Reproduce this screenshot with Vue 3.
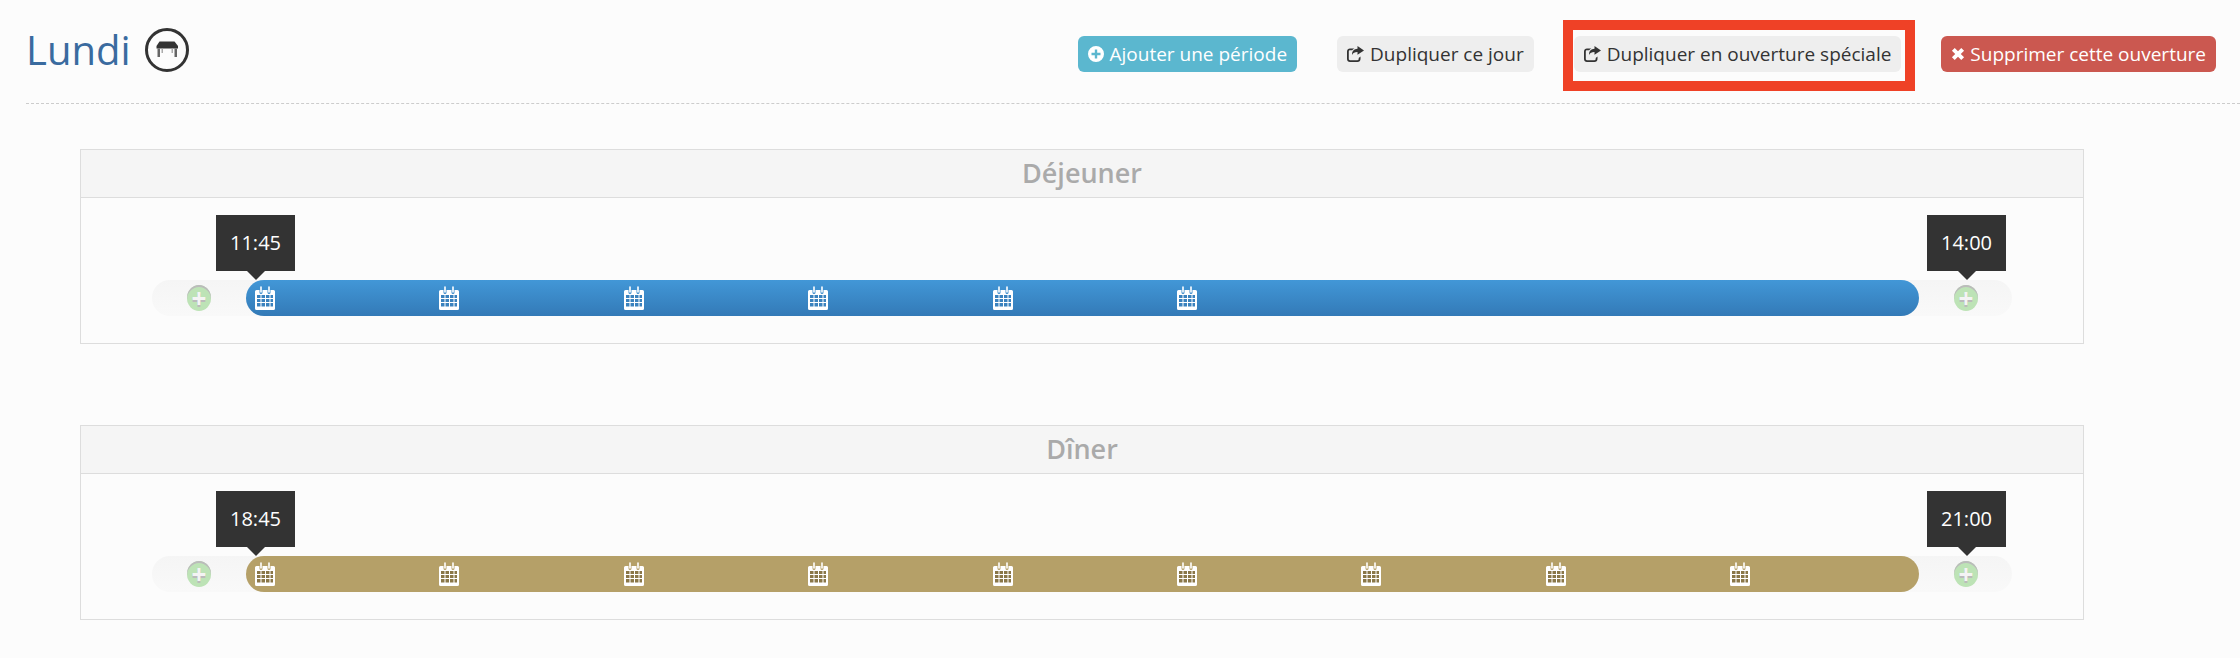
<template>
  <div class="page">
    <header class="day-head">
      <h1 class="day-title">
        Lundi
        <svg class="table-icon" viewBox="0 0 44 44" width="44" height="44">
          <circle cx="22" cy="22" r="20.500" fill="none" stroke="#333" stroke-width="3" />
          <path d="M14.500 13.500h15l3.500 4.500v2.500H11.500V18z" fill="#333" />
          <path d="M12.500 20.500H15V29h-2.500zM29.500 20.500H32V29h-2.500z" fill="#666" />
          <path d="M16.500 20.500H18V25h-1.500zM26.500 20.500H28V25h-1.500z" fill="#aaa" />
        </svg>
      </h1>
      <div class="actions">
        <a class="btn btn-info">
          <svg class="ico" viewBox="0 0 16 16" width="16" height="16">
            <path fill-rule="evenodd" d="M8 0a8 8 0 1 0 0 16A8 8 0 0 0 8 0zM6.800 3.500h2.400v3.300h3.300v2.400H9.200v3.300H6.800V9.200H3.500V6.800h3.300z" fill="#fff" />
          </svg>
          Ajouter une période
        </a>
        <a class="btn btn-default">
          <svg class="ico" viewBox="0 0 17 16" width="17" height="16">
            <path d="M10.500 0v2.800C7 3 5 5 5 9c1.200-2.300 3-3.100 5.500-3v2.800L17 4.400zM3 2.500C1.300 2.500 0 3.800 0 5.500v7.500C0 14.700 1.300 16 3 16h7.500c1.700 0 3-1.300 3-3v-2.400l-1.800 1.300V13c0 .7-.5 1.200-1.200 1.200H3c-.7 0-1.200-.5-1.200-1.200V5.500c0-.7.5-1.200 1.200-1.200h2.200c.6-.7 1.300-1.300 2.200-1.800z" fill="#333" />
          </svg>
          Dupliquer ce jour
        </a>
        <a class="btn btn-default highlighted">
          <svg class="ico" viewBox="0 0 17 16" width="17" height="16">
            <path d="M10.500 0v2.800C7 3 5 5 5 9c1.200-2.300 3-3.100 5.500-3v2.800L17 4.400zM3 2.500C1.300 2.500 0 3.800 0 5.500v7.500C0 14.700 1.300 16 3 16h7.500c1.700 0 3-1.300 3-3v-2.400l-1.800 1.300V13c0 .7-.5 1.200-1.200 1.200H3c-.7 0-1.200-.5-1.200-1.200V5.500c0-.7.5-1.200 1.200-1.200h2.200c.6-.7 1.300-1.300 2.200-1.800z" fill="#333" />
          </svg>
          Dupliquer en ouverture spéciale
        </a>
        <a class="btn btn-danger">
          <svg class="ico" viewBox="0 0 12 12" width="14" height="14">
            <path d="M3.200.8 6 3.600 8.800.8l2.400 2.400L8.400 6l2.800 2.800-2.400 2.400L6 8.400l-2.800 2.800L.8 8.800 3.600 6 .8 3.200z" fill="#fff" />
          </svg>
          Supprimer cette ouverture
        </a>
      </div>
    </header>

    <section v-for="period in periods" :key="period.name" class="period">
      <h2 class="period-title">{{ period.name }}</h2>
      <div class="period-body">
        <div class="track">
          <div class="track-end">
            <span class="plus">+</span>
          </div>
          <div class="bar" :class="period.color">
            <span class="time-tip">{{ period.start }}</span>
            <svg v-for="n in period.days" :key="n" class="cal" viewBox="0 0 20 24" width="20" height="24">
              <path d="M1.500 4H4.500V6.500a1.500 1.500 0 0 0 3 0V4h5V6.500a1.500 1.500 0 0 0 3 0V4h3A1.500 1.500 0 0 1 20 5.500v17a1.500 1.500 0 0 1-1.500 1.500h-17A1.500 1.500 0 0 1 0 22.500v-17A1.500 1.500 0 0 1 1.500 4z" fill="#fff" />
              <path d="M5.200 1a.8.8 0 0 1 1.600 0v5a.8.8 0 0 1-1.600 0zM13.200 1a.8.8 0 0 1 1.600 0v5a.8.8 0 0 1-1.600 0z" fill="#fff" />
              <path class="cells" d="M2 9h3.500v3H2zM6.500 9H10v3H6.500zM11 9h3.500v3H11zM15.500 9H18v3h-2.500zM2 13h3.500v3H2zM6.500 13H10v3H6.500zM11 13h3.500v3H11zM15.500 13H18v3h-2.500zM2 17h3.500v3.500H2zM6.500 17H10v3.500H6.500zM11 17h3.500v3.500H11zM15.500 17H18v3.500h-2.500z" />
            </svg>
          </div>
          <div class="track-end right">
            <span class="time-tip">{{ period.end }}</span>
            <span class="plus">+</span>
          </div>
        </div>
      </div>
    </section>
  </div>
</template>

<script setup>
const periods = [
  { name: 'Déjeuner', start: '11:45', end: '14:00', color: 'blue', days: 6 },
  { name: 'Dîner', start: '18:45', end: '21:00', color: 'gold', days: 9 }
];
</script>

<style>
body {
  background: #fcfcfc;
}
</style>

<style scoped>
.page {
  height: 658px;
  overflow: hidden;
  font-family: "Open Sans", sans-serif;
  color: #333;
}

.day-head {
  display: flex;
  align-items: flex-start;
  justify-content: space-between;
  height: 103px;
  margin-left: 26px;
  padding-right: 24px;
  border-bottom: 1px dashed #ccc;
}

.day-title {
  display: flex;
  align-items: center;
  gap: 14px;
  margin: 24px 0 0;
  font-size: 40px;
  line-height: 52px;
  font-weight: 400;
  color: #3a6b9f;
}

.actions {
  display: flex;
  gap: 40px;
  margin-top: 36px;
}

.btn {
  display: flex;
  align-items: center;
  gap: 6px;
  height: 36px;
  padding: 0 10px;
  border-radius: 6px;
  font-size: 19px;
  white-space: nowrap;
}

.btn-info {
  background: #5bb7cf;
  color: #fff;
}

.btn-default {
  background: #eee;
  color: #333;
}

.btn-danger {
  gap: 5px;
  background: #cb5850;
  color: #fff;
}

.highlighted {
  position: relative;
}

.highlighted::after {
  content: "";
  position: absolute;
  inset: -16px -14px -19px -11px;
  border: 10px solid #ef4126;
  pointer-events: none;
}

.period {
  width: 2004px;
  margin: 45px 0 0 80px;
  box-sizing: border-box;
  border: 1px solid #ddd;
}

.period + .period {
  margin-top: 81px;
}

.period-title {
  box-sizing: border-box;
  height: 48px;
  margin: 0;
  background: #f5f5f5;
  border-bottom: 1px solid #ddd;
  text-align: center;
  font-size: 27px;
  line-height: 46px;
  font-weight: 600;
  color: #aaa;
}

.period-body {
  padding: 82px 71px 27px 71px;
}

.track {
  display: flex;
  height: 36px;
  border-radius: 18px;
  background: linear-gradient(to bottom, #f5f5f5, #f9f9f9);
}

.track-end {
  position: relative;
  display: flex;
  align-items: center;
  justify-content: center;
  flex: 0 0 94px;
}

.track-end.right {
  flex-basis: 92px;
  margin-left: 1px;
}

.plus {
  width: 24px;
  height: 26px;
  border-radius: 50%;
  background: #bde3b6;
  box-shadow: inset 0 2px 0 #bbb;
  text-align: center;
  font-size: 26px;
  line-height: 27px;
  font-weight: 700;
  color: #f4f4f4;
  text-shadow: 0 2px 0 #bbb;
}

.bar {
  position: relative;
  flex: 1;
  display: flex;
  align-items: center;
  gap: 164.400px;
  padding-left: 9px;
  border-radius: 18px;
}

.bar.blue {
  background: linear-gradient(to bottom, #4297d7, #337ab7);
}

.bar.gold {
  background: #b5a068;
}

.blue .cells {
  fill: #3a82be;
}

.gold .cells {
  fill: #8a7748;
}

.cal {
  flex: none;
}

.time-tip {
  position: absolute;
  bottom: 45px;
  left: -30px;
  width: 79px;
  height: 56px;
  background: #333;
  color: #fff;
  text-align: center;
  font-size: 20px;
  line-height: 56px;
}

.track-end .time-tip {
  left: 7px;
}

.time-tip::after {
  content: "";
  position: absolute;
  top: 100%;
  left: 50%;
  margin-left: -9px;
  border-style: solid;
  border-width: 9px 9px 0;
  border-color: #333 transparent transparent;
}
</style>
